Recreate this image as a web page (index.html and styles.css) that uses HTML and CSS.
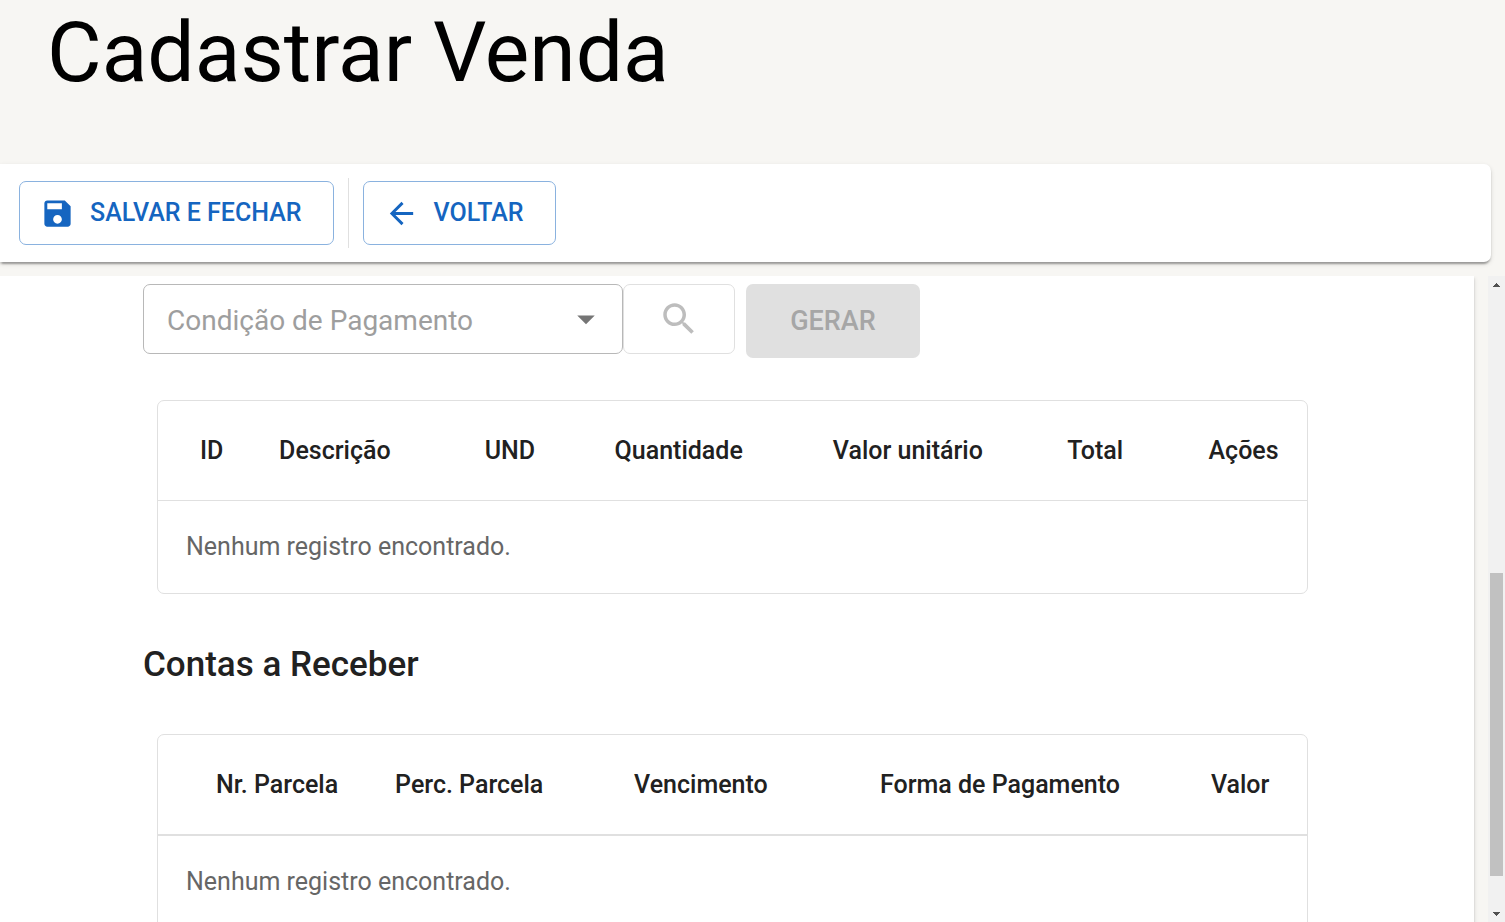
FILE: index.html
```html
<!DOCTYPE html>
<html lang="pt-BR">
<head>
<meta charset="utf-8">
<meta name="viewport" content="width=device-width, initial-scale=1">
<title>Cadastrar Venda</title>
<link rel="stylesheet" href="styles.css">
</head>
<body>
<div class="page">
  <header class="page-header">
    <h1 class="page-title">Cadastrar Venda</h1>
  </header>

  <div class="toolbar">
    <button class="btn btn-outlined" type="button">
      <svg class="btn-icon" viewBox="0 0 24 24" aria-hidden="true"><path d="M17 3H5c-1.110 0-2 .9-2 2v14c0 1.100.890 2 2 2h14c1.100 0 2-.9 2-2V7l-4-4zm-5 16c-1.660 0-3-1.340-3-3s1.340-3 3-3 3 1.340 3 3-1.340 3-3 3zm3-10H5V5h10v4z"/></svg>
      SALVAR E FECHAR
    </button>
    <div class="toolbar-divider"></div>
    <button class="btn btn-outlined" type="button">
      <svg class="btn-icon" viewBox="0 0 24 24" aria-hidden="true"><path d="M20 11H7.830l5.590-5.590L12 4l-8 8 8 8 1.410-1.410L7.830 13H20v-2z"/></svg>
      VOLTAR
    </button>
  </div>

  <div class="scroll-area">
    <main class="paper">
      <form class="payment">
        <div class="select-field">
          <select class="select" aria-label="Condição de Pagamento">
            <option>Condição de Pagamento</option>
          </select>
          <svg class="select-arrow" viewBox="0 0 24 24" aria-hidden="true"><path d="M7 10l5 5 5-5z"/></svg>
        </div>
        <button class="btn btn-search" type="button" aria-label="Pesquisar" disabled>
          <svg class="search-icon" viewBox="0 0 24 24" aria-hidden="true"><path d="M15.500 14h-.79l-.28-.27C15.410 12.590 16 11.110 16 9.500 16 5.910 13.090 3 9.500 3S3 5.910 3 9.500 5.910 16 9.500 16c1.610 0 3.090-.59 4.230-1.570l.27.28v.79l5 4.990L20.490 19l-4.990-5zm-6 0C7.010 14 5 11.990 5 9.500S7.010 5 9.500 5 14 7.010 14 9.500 11.990 14 9.500 14z"/></svg>
        </button>
        <button class="btn btn-generate" type="button" disabled>GERAR</button>
      </form>

      <div class="table-card">
        <table class="table items">
          <colgroup><col class="c-id"><col class="c-desc"><col class="c-und"><col class="c-qty"><col class="c-unit"><col class="c-total"><col></colgroup>
          <thead>
            <tr><th>ID</th><th>Descrição</th><th>UND</th><th>Quantidade</th><th>Valor unitário</th><th>Total</th><th>Ações</th></tr>
          </thead>
          <tbody><tr><td colspan="7">Nenhum registro encontrado.</td></tr></tbody>
        </table>
      </div>

      <h2 class="section-title">Contas a Receber</h2>

      <div class="table-card">
        <table class="table receivables">
          <colgroup><col class="c-number"><col class="c-percent"><col class="c-due"><col class="c-method"><col></colgroup>
          <thead>
            <tr><th>Nr. Parcela</th><th>Perc. Parcela</th><th>Vencimento</th><th>Forma de Pagamento</th><th>Valor</th></tr>
          </thead>
          <tbody><tr><td colspan="5">Nenhum registro encontrado.</td></tr></tbody>
        </table>
      </div>
    </main>

    <div class="scrollbar" aria-hidden="true">
      <svg class="scroll-arrow" viewBox="0 0 17 17"><path d="M5 11V10h1V9h1V8h1V7h1v1h1v1h1v1h1v1z"/></svg>
      <div class="scroll-track"><div class="scroll-thumb"></div></div>
      <svg class="scroll-arrow" viewBox="0 0 17 17"><path d="M5 7v1h1v1h1v1h1v1h1v-1h1V9h1V8h1V7z"/></svg>
    </div>
  </div>
</div>
</body>
</html>
```
FILE: styles.css
```css
* {
  box-sizing: border-box;
}

body {
  margin: 0;
  background: #f7f6f3;
  color: #212121;
  font-family: Roboto, "Liberation Sans", sans-serif;
}

.page {
  display: flex;
  flex-direction: column;
  height: 100vh;
  overflow: hidden;
}

.page-header {
  flex: none;
  padding: 4px 47px 62px;
}

.page-title {
  margin: 0;
  color: #000;
  font-size: 84px;
  font-weight: 400;
  line-height: 98px;
}

.toolbar {
  display: flex;
  flex: none;
  align-items: center;
  gap: 14px;
  margin-right: 14px;
  padding: 14px 19px;
  background: #fff;
  border-radius: 0 7px 7px 0;
  box-shadow: 0 4px 2px -2px rgba(0, 0, 0, 0.2), 0 2px 2px rgba(0, 0, 0, 0.14), 0 2px 5px rgba(0, 0, 0, 0.12);
}

.toolbar-divider {
  width: 1px;
  height: 70px;
  background: #e0e0e0;
}

.btn {
  display: flex;
  align-items: center;
  justify-content: center;
  border: 1px solid transparent;
  border-radius: 7px;
  background: none;
  font-family: inherit;
  font-size: 25px;
  font-weight: 500;
  line-height: 44px;
}

.btn-outlined {
  gap: 15px;
  height: 64px;
  padding: 0 31px 0 20px;
  border-color: #8ab2df;
  color: #1565c0;
  cursor: pointer;
}

.btn-icon {
  width: 35px;
  height: 35px;
  fill: currentColor;
}

.scroll-area {
  display: flex;
  flex: 1;
  justify-content: space-between;
  gap: 14px;
  min-height: 0;
  margin-top: 14px;
  overflow: hidden;
}

.paper {
  flex: 1;
  align-self: flex-start;
  padding: 8px 152px 64px 143px;
  background: #fff;
  box-shadow: 0 4px 2px -2px rgba(0, 0, 0, 0.2), 0 2px 2px rgba(0, 0, 0, 0.14), 0 2px 5px rgba(0, 0, 0, 0.12);
}

.payment {
  display: flex;
  align-items: flex-start;
}

.select-field {
  position: relative;
  width: 480px;
}

.select {
  display: block;
  width: 100%;
  height: 70px;
  padding: 2px 56px 0 23px;
  appearance: none;
  border: 1px solid #b8b8b8;
  border-radius: 7px;
  background: #fff;
  color: #9e9e9e;
  font-family: inherit;
  font-size: 28px;
}

.select-arrow {
  position: absolute;
  top: 14px;
  right: 16px;
  width: 42px;
  height: 42px;
  fill: #757575;
  pointer-events: none;
}

.btn-search {
  width: 112px;
  height: 70px;
  border-color: #e0e0e0;
}

.search-icon {
  width: 42px;
  height: 42px;
  fill: #bdbdbd;
}

.btn-generate {
  width: 174px;
  height: 74px;
  margin-left: 11px;
  background: #e0e0e0;
  color: #a6a6a6;
  font-size: 27px;
}

.table-card {
  margin: 0 14px;
  border: 1px solid #e0e0e0;
  border-radius: 7px;
}

.payment + .table-card {
  margin-top: 42px;
}

.table {
  width: 100%;
  border-collapse: separate;
  border-spacing: 0;
  table-layout: fixed;
  font-size: 25px;
  line-height: 36px;
}

.table th {
  height: 100px;
  padding: 0 0 0 28px;
  border-bottom: 1px solid #e0e0e0;
  font-weight: 500;
  text-align: left;
  white-space: nowrap;
}

.table td {
  height: 92px;
  padding: 0 28px;
  color: #666;
}

.items th:first-child {
  padding-left: 42px;
}

.receivables th {
  height: 101px;
  border-bottom-width: 2px;
}

.receivables th:first-child {
  padding-left: 58px;
}

.c-id { width: 8.1%; }
.c-desc { width: 17.9%; }
.c-und { width: 11.3%; }
.c-qty { width: 19%; }
.c-unit { width: 20.4%; }
.c-total { width: 12.3%; }

.c-number { width: 18.2%; }
.c-percent { width: 20.8%; }
.c-due { width: 21.4%; }
.c-method { width: 28.8%; }

.section-title {
  margin: 42px 0 40px;
  font-size: 35px;
  font-weight: 500;
  line-height: 58px;
}

.scrollbar {
  display: flex;
  flex: none;
  flex-direction: column;
  width: 17px;
  background: #f1f1f1;
}

.scroll-arrow {
  width: 17px;
  height: 17px;
  fill: #505050;
}

.scroll-track {
  display: flex;
  flex: 1;
  flex-direction: column;
  justify-content: flex-end;
  padding: 0 2px 29px;
}

.scroll-thumb {
  height: 52%;
  background: #c1c1c1;
}
```
